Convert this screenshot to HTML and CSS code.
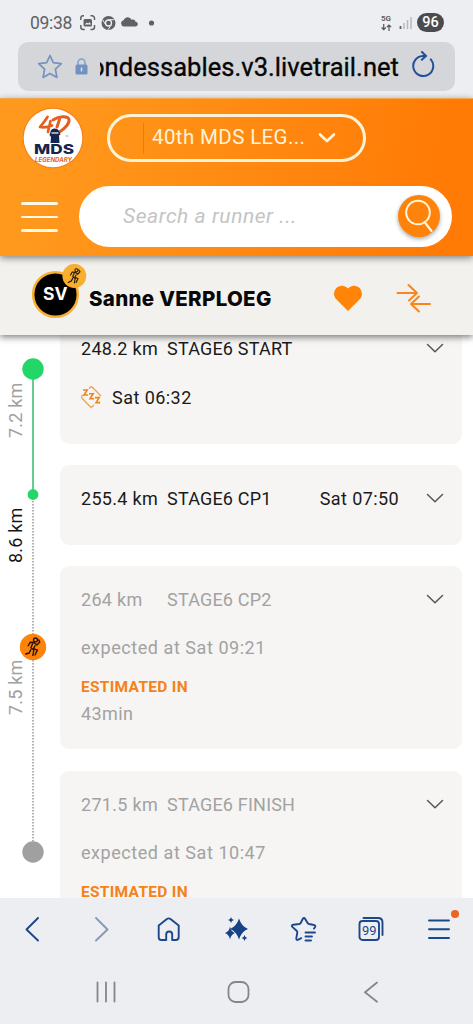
FILE: index.html
```html
<!DOCTYPE html>
<html lang="en">
<head>
<meta charset="utf-8">
<title>LiveTrail</title>
<link rel="stylesheet" href="styles.css">
</head>
<body>
<div class="phone">
  <div class="status">
    <span class="clock">09:38</span>
    <svg class="status-icons" width="80" height="20" viewBox="0 0 80 20">
      <g fill="none" stroke="#606164" stroke-width="1.5"><path d="M4 2.700H3a2.500 2.500 0 0 0-2.200 2.500V7M10.500 2.700h1.500a2.500 2.500 0 0 1 2.500 2.500V7M.8 12v2a2.500 2.500 0 0 0 2.500 2.500h1.500M14.500 12v2a2.500 2.500 0 0 1-2.500 2.500h-1.500"/></g>
      <rect x="3.500" y="6" width="8.500" height="7.500" rx="1.500" fill="#606164"/><path d="m4.800 11.500 2-2 1.300 1 1.500-1.300 1.500 2.300z" fill="#edeef2"/>
      <circle cx="28.500" cy="10" r="7" fill="#606164"/><circle cx="28.500" cy="10" r="3" fill="#606164" stroke="#edeef2" stroke-width="1.300"/><path d="M28.500 6.700h6M25.500 11.500l-3-5M31.300 11.700l-3.200 5" stroke="#edeef2"/>
      <path d="M45 14a3.200 3.200 0 0 1-.4-6.300C46 4 51 3.500 52.500 7.300c2-.7 3.700.3 4 1.900 1.600.2 2.300 1.200 2.300 2.400 0 1.500-1 2.400-2.300 2.400z" transform="translate(-1 -.5)" fill="#606164"/>
      <circle cx="71.500" cy="10" r="2.600" fill="#606164"/>
    </svg>
    <span class="net">5G<svg width="11" height="7" viewBox="0 0 11 7"><path d="M2.700 0v5.500M.6 3.500l2.100 2.200 2.100-2.200M8 7V1M5.900 3.200 8 1l2.100 2.200" fill="none" stroke="#55565a" stroke-width="1.200"/></svg></span>
    <svg class="signal" width="13" height="14" viewBox="0 0 13 14"><path d="M1.500 10v3" stroke="#606164" stroke-width="1.800"/><path d="M5 7v6M8.500 4v9M12 1v12" stroke="#b8b9bd" stroke-width="1.500"/></svg>
    <span class="battery">96</span>
  </div>

  <div class="address">
    <svg width="26" height="26" viewBox="0 0 26 26"><path d="m13 1.500 3.300 7.200 8 1-5.900 5.500 1.500 8.200-6.900-4-6.900 4 1.500-8.200-5.900-5.500 8-1z" fill="none" stroke="#7593bd" stroke-width="1.700" stroke-linejoin="round"/></svg>
    <svg class="lock" width="13" height="17" viewBox="0 0 13 17"><path d="M3 8V4.500a3.500 3.500 0 0 1 7 0V8" fill="none" stroke="#829fc8" stroke-width="1.500"/><rect x=".5" y="6.500" width="12" height="10" rx="1.500" fill="#7191c1"/><path d="M6.500 9.500v4" stroke="#dbe1ec" stroke-width="1.500"/></svg>
    <span class="url"><span class="url-text">ondessables.v3.livetrail.net</span></span>
    <svg class="reload" width="24" height="28" viewBox="0 0 24 28"><path d="M19.800 8.400A10 10 0 1 1 11.700 5h2" fill="none" stroke="#20519a" stroke-width="2" stroke-linecap="round"/><path d="m11 1 4 4-4.200 3.800" fill="none" stroke="#20519a" stroke-width="2" stroke-linecap="round"/></svg>
  </div>

  <header class="header">
    <div class="header-row">
      <svg class="logo" width="62" height="62" viewBox="0 0 62 62">
        <circle cx="31" cy="31" r="30.500" fill="#f98019"/><circle cx="31" cy="31" r="29.300" fill="#fff"/>
        <g fill="none" stroke="#e45f1f" stroke-linecap="round" stroke-linejoin="round"><path d="M25.500 10c-2.500 4-5 7-7.500 10 4 .8 8 0 12-1.500M28.500 14c-.8 4-1.700 7-2.500 11" stroke-width="2.700"/><path d="M31 13c6-4 15-4.500 16-.5.8 3.500-4 9-9.500 12.500M37.500 12.500 35 20" stroke-width="3"/></g>
        <path d="M28.500 25c0-4 7-5 9 0l1 2.500-1.500 1 .5 7.500h-9l.5-6-1.500-2z" fill="#15254f"/><path d="M29.500 26h7" stroke="#fff" stroke-width="1.200"/>
        <path d="M43.500 29h3" stroke="#8c8790" stroke-width=".8"/>
        <text class="logo-name" x="12" y="47.300" textLength="40" lengthAdjust="spacingAndGlyphs">MDS</text>
        <text class="logo-sub" x="13" y="54.500" textLength="37" lengthAdjust="spacingAndGlyphs">LEGENDARY</text>
      </svg>
      <div class="race">
        <span class="race-rule"></span>
        <span class="race-name">40th MDS LEG...</span>
        <svg width="18" height="12" viewBox="0 0 18 12"><path d="m2 2.500 7 6.500 7-6.500" fill="none" stroke="#fff6dc" stroke-width="2.600" stroke-linecap="round" stroke-linejoin="round"/></svg>
      </div>
    </div>
    <div class="header-row search-row">
      <div class="burger"><i></i><i></i><i></i></div>
      <div class="search">
        <span class="placeholder">Search a runner ...</span>
        <span class="search-button"><svg width="42" height="42" viewBox="0 0 42 42"><circle cx="20" cy="17.500" r="11.800" fill="none" stroke="#fff6dc" stroke-width="2"/><path d="m26.500 27 7 9" stroke="#fff6dc" stroke-width="2.200" stroke-linecap="round"/></svg></span>
      </div>
    </div>
  </header>

  <div class="runner">
    <svg width="55" height="56" viewBox="0 0 55 56">
      <circle cx="23.500" cy="31.500" r="22.300" fill="#000" stroke="#f9ae2d" stroke-width="2.500"/>
      <circle cx="42.300" cy="13" r="11.900" fill="#f9ae2d"/>
      <text class="initials" x="11" y="37" textLength="24.500" lengthAdjust="spacingAndGlyphs">SV</text>
      <g transform="translate(35.500 5) scale(.78)" fill="none" stroke="#251d11" stroke-width="1.500" stroke-linecap="round" stroke-linejoin="round"><circle cx="11.500" cy="3" r="2"/><path d="M14.500 2.500 16 5l-3 3-3-2.500-4-.3L4 9M9 5.500 6.800 11l3 2.500-1 5.500M11 9l-1.500 3 4 1.500-2.500 5M6.800 13 5 16.500 1 18.500"/></g>
    </svg>
    <strong class="runner-name">Sanne VERPLOEG</strong>
    <svg class="heart" width="30" height="27" viewBox="0 0 30 27"><path d="M15 26 3.500 14.600C-4 6 7.500-4.500 15 3.500 22.500-4.500 34 6 26.500 14.600z" fill="#ff8407"/></svg>
    <svg class="compare" width="36" height="30" viewBox="0 0 36 30"><path d="M1.500 10h19M12.500 2l8.500 8-8 7.500M34 21H15.500M23 13.500 15 21l8 7.500" fill="none" stroke="#f9851c" stroke-width="2" stroke-linecap="round" stroke-linejoin="round"/></svg>
  </div>

  <main class="course">
    <div class="rail">
      <div class="legs"><span class="leg l1">7.2 km</span><span class="leg l2">8.6 km</span><span class="leg l3">7.5 km</span></div>
      <svg class="track" width="28" height="563" viewBox="0 0 28 563">
        <path d="M14 34v126" stroke="#66cd91" stroke-width="2"/>
        <path d="M14 160v357" stroke="#a9a9a9" stroke-width="1.800" stroke-dasharray="1.500 1.500"/>
        <circle cx="14" cy="34" r="10.700" fill="#22d768"/><circle cx="14" cy="159.500" r="5.400" fill="#22d768"/>
        <circle cx="14" cy="517" r="10.700" fill="#a0a0a0"/><circle cx="14" cy="312" r="13.200" fill="#ff820b"/>
        <g transform="translate(5.300 302) scale(.97)" fill="none" stroke="#241407" stroke-width="1.400" stroke-linecap="round" stroke-linejoin="round"><circle cx="11.500" cy="3" r="2"/><path d="M14.800 3 16 5.200l-3 3-3-2.500-4-.3L4 9M9 5.700 6.800 11l3 2.500-1 5.500M11 9l-1.500 3 4 1.500-2.500 5M6.800 13 5 16.500l-3.500 1"/></g>
      </svg>
    </div>
    <div class="cards">
      <section class="card c1">
        <div class="line"><span class="km">248.2 km</span><span class="name n1">STAGE6 START</span><svg class="chev" width="18" height="11" viewBox="0 0 18 11"><path d="m1.500 1.500 7.500 7.200 7.500-7.200"/></svg></div>
        <div class="line rest"><svg width="21" height="22" viewBox="0 0 21 22"><path d="M8 2.500 9.500 1h1.500l9 9M13 19l-2 2H9.500L.8 12v-2L2 9" fill="none" stroke="#efa253" stroke-width="1.300"/><path d="M2 4h4.200L3 9h4.200M8 7.800h4.200L9 12.800h4.200M14 11.600h4.200L15 16.600h4.200" fill="none" stroke="#ee861d" stroke-width="1.600"/></svg><span class="time t1">Sat 06:32</span></div>
      </section>
      <section class="card c2">
        <div class="line"><span class="km">255.4 km</span><span class="name n2">STAGE6 CP1</span><span class="time t2">Sat 07:50</span><svg class="chev" width="18" height="11" viewBox="0 0 18 11"><path d="m1.500 1.500 7.500 7.200 7.500-7.200"/></svg></div>
      </section>
      <section class="card c3 pending">
        <div class="line"><span class="km k3">264 km</span><span class="name n2">STAGE6 CP2</span><svg class="chev" width="18" height="11" viewBox="0 0 18 11"><path d="m1.500 1.500 7.500 7.200 7.500-7.200"/></svg></div>
        <div class="line expected"><span>expected at Sat 09:21</span></div>
        <div class="estimate"><span>ESTIMATED IN</span></div>
        <div class="line remaining"><span>43min</span></div>
      </section>
      <section class="card c4 pending">
        <div class="line"><span class="km">271.5 km</span><span class="name n4">STAGE6 FINISH</span><svg class="chev" width="18" height="11" viewBox="0 0 18 11"><path d="m1.500 1.500 7.500 7.200 7.500-7.200"/></svg></div>
        <div class="line expected"><span>expected at Sat 10:47</span></div>
        <div class="estimate last"><span>ESTIMATED IN</span></div>
      </section>
    </div>
  </main>

  <nav class="browser-nav">
    <svg width="28" height="28" viewBox="0 0 28 28"><path d="M19 3 7.500 14.500 19 25.500" class="blue"/></svg>
    <svg width="28" height="28" viewBox="0 0 28 28"><path d="M9 3 20.500 14.500 9 25.500" class="blue faded"/></svg>
    <svg width="28" height="28" viewBox="-.7 0 28 28"><path d="M4 10.500 12.200 4q1.800-1.200 3.600 0L24 10.500V22q0 3-3 3h-3.500v-5.500a3 3 0 0 0-6 0V25H6.500q-2.500 0-2.500-3z" class="blue"/></svg>
    <svg width="28" height="28" viewBox="0 0 28 28"><g fill="#174287"><path d="M17 3.500q2.500 8 9 10.500-6.500 2.500-9 10.500-2.500-8-9-10.500 6.500-2.500 9-10.500z"/><path d="M8 11.500q.8 5 5 6.500-4.200 1.500-5 6.500-.8-5-5-6.500 4.200-1.500 5-6.500zM9 2q.4 2.500 3 3-2.600.6-3 3-.4-2.400-3-3 2.600-.5 3-3zM22.500 20q.5 2.300 2.800 3-2.300.7-2.800 3-.5-2.300-2.800-3 2.300-.7 2.800-3z"/></g></svg>
    <svg width="28" height="28" viewBox="1 0 28 28"><path d="M25 13.500c2-2 2-3.500-1-3.800l-4-.7c-1-.2-1.500-1-2-2l-1.800-3q-1.200-2-2.500 0l-2 4q-.5.800-1.500 1l-6 .8q-2.400.5-.6 2.300l4 3.700q.9.800.7 1.800l-1 5.600q-.2 2.500 2 1.500l3-1.500M16.500 17.500H26M16.500 21.500H23M16.500 25.500h5.500" class="blue"/></svg>
    <svg width="28" height="28" viewBox="0 0 28 28"><rect x="2.500" y="6" width="19.500" height="19" rx="3" class="blue"/><path d="M6.500 3H21q4.500 0 4.500 4.500V20" class="blue"/><text class="tab-count" x="5" y="20.300" textLength="14.500" lengthAdjust="spacingAndGlyphs">99</text></svg>
    <svg width="28" height="28" viewBox="0 0 28 28"><path d="M4 5.500h20M4 14.200h20M4 23h20" class="blue"/></svg>
    <i class="notice"></i>
  </nav>
  <div class="system-nav">
    <svg width="26" height="26" viewBox="0 0 26 26"><path d="M4.500 3.500v19M13 3.500v19M21.500 3.500v19" class="gray"/></svg>
    <svg width="26" height="26" viewBox="0 0 26 26"><rect x="2.500" y="3" width="20" height="20" rx="7" class="gray"/></svg>
    <svg width="26" height="26" viewBox="0 0 26 26"><path d="M19 3.500 7 13.200 19 22.700" class="gray"/></svg>
  </div>
</div>
</body>
</html>
```

FILE: styles.css
```css
* { box-sizing: border-box; }
body { margin: 0; background: #edeef2; font-family: Roboto, "Open Sans", sans-serif; }
svg { display: block; flex: none; }
.phone { width: 473px; height: 1024px; overflow: hidden; display: flex; flex-direction: column; }
.phone > * { flex: none; }

.status { height: 42px; padding: 3px 29px 0 30px; display: flex; align-items: center; color: #606164; }
.clock { width: 50px; font-size: 17.500px; letter-spacing: -.3px; }
.net { margin-left: auto; width: 12px; margin-right: 6px; font: 700 8px/8px Roboto, sans-serif; display: flex; flex-direction: column; gap: 1px; }
.signal { margin-right: 5px; }
.battery { width: 27px; height: 19px; border-radius: 10px; background: #4a4b4e; color: #fff; font: 500 14.500px/20px Roboto, sans-serif; text-align: center; }

.address { height: 49px; margin: 0 18px 7px; padding: 0 0 0 19px; border-radius: 10px; background: #d4d6da; display: flex; align-items: center; }
.lock { margin: 0 0 0 12px; }
.url { margin-left: 12px; width: 299px; overflow: hidden; display: flex; justify-content: flex-end; }
.url-text { font-size: 25.500px; line-height: 34px; letter-spacing: .05px; margin-top: 1px; color: #060606; white-space: nowrap; -webkit-text-stroke: .35px #060606; }
.reload { margin-left: 12px; margin-top: -3px; }

.header { height: 158px; position: relative; z-index: 3; padding: 8px 21px 0; background: linear-gradient(100deg, #ff991d 10%, #ff7b06 90%); border-top: 1px solid #f5a74c; box-shadow: 0 2px 7px #0007; }
.header-row { display: flex; }
.logo { margin-left: 1px; }
.race { margin: 7px 0 0 23px; width: 259px; height: 48px; border: 3px solid #fff3d6; border-radius: 24px; display: flex; align-items: center; padding-left: 33px; }
.race-rule { width: 1px; height: 31px; background: #f4780f; margin-right: 8px; }
.race-name { width: 166px; margin-top: -2px; font-size: 20.500px; font-weight: 400; color: #fff3d8; letter-spacing: .38px; white-space: nowrap; }
.search-row { margin-top: 17px; }
.burger { width: 37px; padding-top: 16px; display: flex; flex-direction: column; gap: 11px; }
.burger i { height: 2.500px; border-radius: 2px; background: #fff8e3; }
.search { margin-left: 21px; width: 373px; height: 61px; border-radius: 31px; background: #fff; display: flex; align-items: center; justify-content: space-between; padding: 0 12px 2px 44px; }
.placeholder { font-size: 21px; font-style: italic; font-weight: 400; color: #c4c4c4; white-space: nowrap; letter-spacing: .55px; }
.search-button { border-radius: 50%; background: #ff820b; box-shadow: 0 2px 4px #0005; }

.runner { height: 79px; position: relative; z-index: 2; display: flex; align-items: flex-start; background: #f2f1ee; padding: 7px 0 0 32px; box-shadow: 0 2px 7px #0008; }
.initials { font: 700 17px Inter, sans-serif; fill: #fff; }
.runner-name { margin: 24px 0 0 2px; width: 244px; font: 800 20.500px/24px Inter, sans-serif; letter-spacing: .3px; white-space: nowrap; color: #080808; }
.heart { margin-top: 22px; }
.compare { margin: 20px 0 0 33px; }

.logo-name { font: 800 13px Inter, sans-serif; fill: #15254f; }
.logo-sub { font: italic 700 6.500px Inter, sans-serif; fill: #e8641f; }

.course { height: 563px; background: #fff; display: flex; overflow: hidden; }
.rail { width: 60px; display: flex; }
.legs { width: 19px; padding: 47px 0 0 4px; display: flex; flex-direction: column; }
.leg { width: 24px; height: 57px; line-height: 24px; writing-mode: vertical-rl; transform: rotate(180deg); font-size: 18px; letter-spacing: .2px; color: #a0a0a0; white-space: nowrap; text-align: center; }
.l2 { margin-top: 68px; color: #151515; }
.l3 { margin-top: 95px; }
.track { position: relative; }
.cards { width: 402px; display: flex; flex-direction: column; }
.card { flex: none; border-radius: 9px; background: #f6f5f3; padding: 0 18px 0 21px; color: #1a1a1a; font-size: 18px; }
.c1 { height: 109px; border-radius: 0 0 9px 9px; }
.c1 .line { margin-top: -1px; }
.c1 .rest { margin-top: 21px; }
.c2 { height: 80px; margin-top: 21px; padding-top: 19px; }
.c3 { height: 183px; margin-top: 21px; padding-top: 19px; }
.c4 { height: 127px; margin-top: 22px; padding-top: 19px; border-radius: 9px 9px 0 0; }
.pending { color: #a2a2a2; }
.line { height: 28px; display: flex; align-items: center; white-space: nowrap; }
.km { width: 86px; letter-spacing: .3px; }
.name { letter-spacing: .2px; }
.chev { margin-left: auto; margin-top: 0; }
.chev path { fill: none; stroke: #555; stroke-width: 1.500; stroke-linecap: round; stroke-linejoin: round; }
.t1 { margin-left: 10px; letter-spacing: .45px; }
.t2 { margin-left: auto; letter-spacing: .4px; }
.t2 + .chev { margin-left: 27px; }
.expected { margin-top: 20px; letter-spacing: .55px; }
.estimate { margin-top: 16px; height: 21px; font: 700 15.500px/21px Roboto, sans-serif; color: #f58218; letter-spacing: .3px; white-space: nowrap; }
.last { height: 15px; }
.remaining { margin-top: 1px; letter-spacing: .4px; }

.browser-nav { height: 62px; position: relative; display: flex; justify-content: space-between; align-items: center; padding: 0 20px 0 19px; background: #edeef2; }
.blue { fill: none; stroke: #1c488b; stroke-width: 1.900; stroke-linecap: round; stroke-linejoin: round; }
.faded { stroke: #8799bb; }
.tab-count { font: 13px Roboto, sans-serif; fill: #1c488b; }
.notice { position: absolute; left: 451px; top: 12px; width: 8px; height: 8px; border-radius: 50%; background: #ec6420; }
.system-nav { height: 64px; padding: 0 89px 0 93px; display: flex; justify-content: space-between; align-items: center; background: #edeef2; }
.gray { fill: none; stroke: #858689; stroke-width: 1.800; stroke-linecap: round; }
```
